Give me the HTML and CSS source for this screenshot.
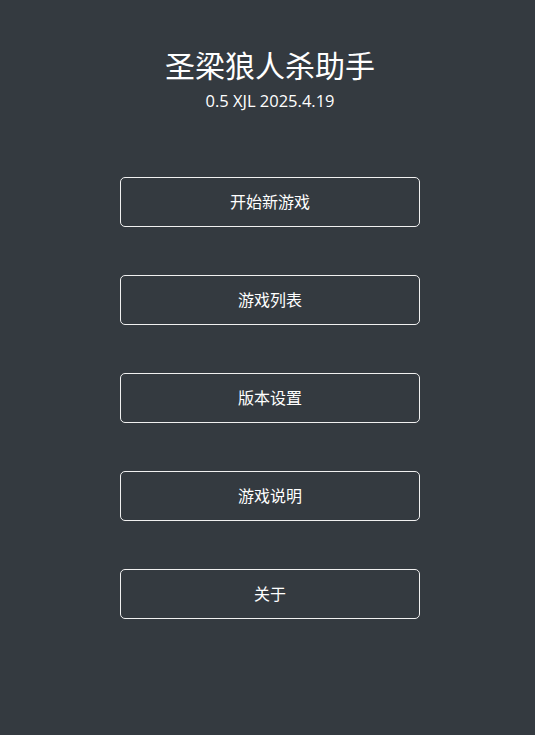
FILE: index.html
```html
<!DOCTYPE html>
<html lang="zh">
<head>
<meta charset="utf-8">
<link rel="stylesheet" href="styles.css">
</head>
<body>
<main class="page">
  <header class="header">
    <h1 class="title">圣梁狼人杀助手</h1>
    <div class="version">0.5 XJL 2025.4.19</div>
  </header>
  <nav class="menu">
    <button class="btn">开始新游戏</button>
    <button class="btn">游戏列表</button>
    <button class="btn">版本设置</button>
    <button class="btn">游戏说明</button>
    <button class="btn">关于</button>
  </nav>
</main>
</body>
</html>
```
FILE: styles.css
```css
html, body {
  margin: 0;
  padding: 0;
  background: #343a40;
  height: 100%;
}
body {
  font-family: "Open Sans", "Noto Sans CJK SC", sans-serif;
  color: #ffffff;
}
.page {
  display: flex;
  flex-direction: column;
  align-items: center;
  padding-top: 46px;
  padding-left: 5px;
}
.header {
  display: flex;
  flex-direction: column;
  align-items: center;
}
.title {
  margin: 0;
  font-size: 30px;
  font-weight: 400;
  line-height: 36px;
  font-family: "Noto Sans CJK SC", sans-serif;
}
.version {
  margin-top: 7px;
  font-size: 16.5px;
  line-height: 24px;
}
.menu {
  margin-top: 64px;
  display: flex;
  flex-direction: column;
  gap: 48px;
}
.btn {
  width: 300px;
  height: 50px;
  background: transparent;
  border: 1px solid #f0f0f0;
  border-radius: 5px;
  color: #ffffff;
  font-size: 16px;
  font-family: "Noto Sans CJK SC", sans-serif;
  padding: 0 0 2px;
}
```
